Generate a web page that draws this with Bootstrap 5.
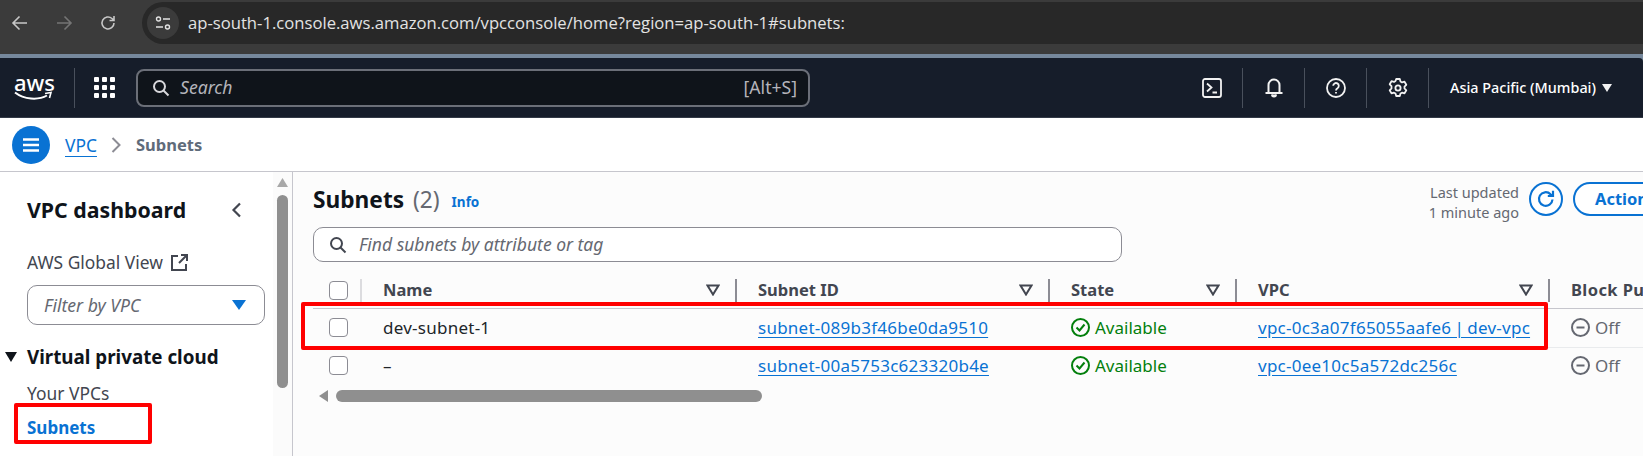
<!DOCTYPE html>
<html lang="en">
<head>
  <meta charset="UTF-8">
  <meta name="viewport" content="width=device-width, initial-scale=1.0">
  <title>Subnets | VPC Console</title>
  <link rel="stylesheet" href="https://cdn.jsdelivr.net/npm/bootstrap@5.3.0/dist/css/bootstrap.min.css">
  <style>
    html, body { height: 100%; }
    body { font-family: "Noto Sans", "Liberation Sans", sans-serif; font-size: 16px; color: #0f141a; overflow: hidden; background: #fff; }
    .shot { position: relative; width: 1643px; height: 456px; overflow: hidden; background: #76889c; }

    /* browser chrome */
    .chrome-bar { height: 54px; background: #3b3b3b; padding-top: 2px; }
    .chrome-btns { width: 142px; height: 42px; padding-left: 11px; gap: 26px; }
    .url-pill { flex: 1; height: 42px; background: #282828; border-radius: 21px 0 0 21px; padding-left: 5px; }
    .site-chip { width: 32px; height: 32px; border-radius: 50%; background: #3b3b3b; margin-right: 9px; }
    .url-text { font-family: "Open Sans", sans-serif; font-size: 16.65px; color: #e3e3e3; white-space: nowrap; }
    .chrome-edge { height: 4px; background: #76889c; }

    /* aws top nav */
    .aws-nav { height: 60px; background: #161d2a; border-bottom: 1px solid #333a47; border-top-right-radius: 4px; color: #fff; }
    .aws-logo { width: 74px; padding-left: 14px; line-height: 1; }
    .aws-word { font-size: 22px; font-weight: 500; line-height: 18px; display: block; margin-top: -2px; }
    .nav-rule { width: 1px; height: 40px; background: #49505c; flex: none; }
    .grid-btn { width: 61px; padding-left: 19px; }
    .grid-dots { display: grid; grid-template-columns: repeat(3, 5px); gap: 3px; }
    .grid-dots i { width: 5px; height: 5px; background: #fff; border-radius: 1px; display: block; }
    .top-search { width: 674px; height: 38px; background: #0f141a; border: 2px solid #6b6f78; border-radius: 8px; padding: 0 11px 0 14px; color: #b4b4bb; font-size: 17.6px; }
    .top-search em { margin-left: 10px; }
    .nav-tools { margin-left: auto; }
    .tool-cell { width: 61px; }
    .region-txt { font-size: 14.4px; font-weight: 500; margin-left: 21px; white-space: nowrap; }
    .region-caret { margin-left: 6px; margin-right: 31px; }

    /* breadcrumb */
    .crumb-bar { height: 54px; background: #fff; border-bottom: 1px solid #c6c6cd; padding: 1px 0 0 12px; }
    .menu-btn { width: 38px; height: 38px; border-radius: 50%; background: #0972d3; color: #fff; margin-right: 15px; }
    .crumb-link { color: #0972d3; text-decoration: underline; text-underline-offset: 4px; font-size: 17.4px; }
    .crumb-now { color: #5f6b7a; font-weight: 700; font-size: 16.5px; }
    .crumb-sep { margin: 0 15px 0 14px; }

    /* sidebar */
    .work-area { height: 284px; background: #fff; }
    .side-nav { width: 293px; border-right: 1px solid #c6c6cd; flex: none; overflow: hidden; }
    .side-body { width: 273px; padding: 24px 9px 0 27px; flex: none; }
    .side-title { font-size: 21.3px; font-weight: 700; line-height: 28px; }
    .side-chev { margin-right: 22px; }
    .side-row { font-size: 17.4px; line-height: 24px; color: #424650; white-space: nowrap; }
    .side-global { margin-top: 26px; }
    .filter-box { height: 40px; width: 238px; border: 1px solid #8c8c94; border-radius: 10px; padding: 0 18px 0 16px; margin-top: 11px; font-size: 17.6px; font-style: italic; color: #656871; }
    .side-group { font-size: 18.8px; font-weight: 700; line-height: 24px; margin: 20px 0 0 -22px; white-space: nowrap; }
    .side-group svg { margin-right: 10px; }
    .side-vpcs { margin-top: 12px; }
    .side-current { color: #0972d3; font-weight: 700; font-size: 17px; margin-top: 11px; }
    .side-next { margin-top: 13px; }
    .side-scroll { width: 19px; background: #fbfbfb; padding: 6px 4px 0; }
    .side-thumb { height: 193px; background: #8f8f8f; border-radius: 6px; margin-top: 8px; }

    /* main */
    .main-pane { flex: 1; min-width: 0; background: #fcfcfc; padding-left: 20px; overflow: hidden; }
    .pane-head { height: 55px; }
    .pane-title { font-size: 22.7px; font-weight: 700; white-space: nowrap; }
    .pane-count { font-weight: 400; color: #656871; margin-left: 3px; }
    .info-link { color: #0972d3; font-size: 13.5px; font-weight: 700; margin-left: 12px; position: relative; top: 3px; }
    .pane-actions { margin-left: auto; gap: 10px; padding-top: 10px; align-self: flex-start; }
    .updated-txt { font-size: 14.5px; line-height: 20px; color: #656871; text-align: right; white-space: nowrap; }
    .action-set { gap: 10px; }
    .refresh-btn { width: 34px; height: 34px; border: 2px solid #0972d3; border-radius: 50%; background: #fff; padding: 0; }
    .actions-clip { width: 70px; overflow: hidden; }
    .actions-btn { width: 120px; height: 34px; border: 2px solid #0972d3; border-radius: 17px; background: #fff; color: #0972d3; font-weight: 700; font-size: 16.5px; padding: 0 0 0 20px; text-align: left; }
    .find-box { width: 809px; height: 35px; border: 1px solid #8c8c94; border-radius: 10px; background: #fff; padding-left: 15px; font-size: 17.5px; font-style: italic; color: #656871; }
    .find-box svg { margin-right: 12px; }
    .subnet-table { width: 1437px; table-layout: fixed; margin: 10px 0 0; --bs-table-bg: transparent; }
    .subnet-table > :not(caption) > * > * { padding: 0; border: 0; vertical-align: middle; }
    .subnet-table thead th { height: 36px; padding-top: 1px; font-weight: 700; color: #424650; font-size: 16.5px; }
    .subnet-table thead tr { border-bottom: 1px solid #c6c6cd; }
    .subnet-table tbody td { height: 39px; font-size: 17px; }
    .subnet-table tbody tr + tr td { height: 37px; }
    .subnet-table tbody tr:first-child { border-bottom: 1px solid #e9ebed; }
    .head-cell { height: 23px; padding: 0 15px 0 21px; border-right: 2px solid #8c8c94; white-space: nowrap; }
    .head-check { height: 23px; padding-left: 16px; border-right: 2px solid #dcdcdf; }
    .head-last { letter-spacing: .4px; }
    .cell-pad { padding-left: 21px; white-space: nowrap; }
    .check-pad { padding-left: 16px; }
    .tick-box { width: 19px; height: 19px; border: 1px solid #8c8c94; border-radius: 4px; background: #fff; display: block; }
    .row-link { color: #0972d3; text-decoration: underline; text-underline-offset: 3px; letter-spacing: .25px; }
    .tight-words { word-spacing: -1.5px; }
    .plain-name { letter-spacing: .25px; }
    .state-ok { color: #037f0c; gap: 5px; }
    .state-off { color: #656871; gap: 5px; }
    .table-scroll { padding: 6px 0 0 6px; gap: 8px; }
    .table-thumb { width: 426px; height: 12px; background: #8f8f8f; border-radius: 6px; }

    /* red annotation boxes */
    .mark-box { position: absolute; border: 4px solid #f00; border-radius: 2px; pointer-events: none; }
    .mark-row { left: 301px; top: 302px; width: 1247px; height: 48px; }
    .mark-side { left: 14px; top: 403px; width: 138px; height: 41px; }
  </style>
</head>
<body>
  <div class="shot">

    <!-- browser toolbar -->
    <div class="chrome-bar d-flex">
      <div class="chrome-btns d-flex align-items-center">
        <svg width="18" height="18" viewBox="0 0 18 18" fill="none" stroke="#c7c7c7" stroke-width="1.6"><path d="M16 9H2M8.5 2.5 2 9l6.5 6.5"/></svg>
        <svg width="18" height="18" viewBox="0 0 18 18" fill="none" stroke="#757575" stroke-width="1.6"><path d="M2 9h14M9.5 2.5 16 9l-6.500 6.500"/></svg>
        <svg width="18" height="18" viewBox="0 0 18 18" fill="none" stroke="#c7c7c7" stroke-width="1.6"><path d="M15 9a6 6 0 1 1-2-4.500L15 6.500M15 2v4.500h-4.500"/></svg>
      </div>
      <div class="url-pill d-flex align-items-center">
        <div class="site-chip d-flex align-items-center justify-content-center">
          <svg width="16" height="16" viewBox="0 0 16 16" fill="none" stroke="#e3e3e3" stroke-width="1.4"><circle cx="3.500" cy="4" r="2"/><path d="M8 4h7M1 12h7"/><circle cx="12.500" cy="12" r="2"/></svg>
        </div>
        <span class="url-text">ap-south-1.console.aws.amazon.com/vpcconsole/home?region=ap-south-1#subnets:</span>
      </div>
    </div>
    <div class="chrome-edge"></div>

    <!-- aws console nav -->
    <nav class="aws-nav d-flex align-items-center">
      <div class="aws-logo">
        <span class="aws-word">aws</span>
        <svg class="d-block" width="39" height="10" viewBox="0 0 39 10" fill="none"><path d="M1 1.500C10 8.500 24 9.500 33 4.500" stroke="#fff" stroke-width="2"/><path d="M31 2.500l6-1-1.500 5.500" stroke="#fff" stroke-width="1.600"/></svg>
      </div>
      <div class="nav-rule"></div>
      <div class="grid-btn">
        <div class="grid-dots"><i></i><i></i><i></i><i></i><i></i><i></i><i></i><i></i><i></i></div>
      </div>
      <div class="top-search d-flex align-items-center">
        <svg width="18" height="18" viewBox="0 0 18 18" fill="none" stroke="#d8d8dc" stroke-width="2"><circle cx="7.500" cy="7.500" r="5.500"/><path d="m11.500 11.500 5 5"/></svg>
        <em>Search</em>
        <span class="ms-auto">[Alt+S]</span>
      </div>
      <div class="nav-tools d-flex align-items-center">
        <div class="tool-cell d-flex justify-content-center">
          <svg width="20" height="20" viewBox="0 0 20 20" fill="none" stroke="#f2f2f2" stroke-width="1.800"><rect x="1" y="1" width="18" height="18" rx="2"/><path d="m5 5.500 4.500 4-4.500 4M10.500 14.500H15"/></svg>
        </div>
        <div class="nav-rule"></div>
        <div class="tool-cell d-flex justify-content-center">
          <svg width="20" height="21" viewBox="0 0 20 21" fill="none" stroke="#f2f2f2" stroke-width="2"><path d="M4.500 15V8a5.500 5.500 0 0 1 11 0v7M1.500 16h17"/><path d="M8 17.500a2 2 0 0 0 4 0" fill="#f2f2f2"/></svg>
        </div>
        <div class="nav-rule"></div>
        <div class="tool-cell d-flex justify-content-center">
          <svg width="20" height="20" viewBox="0 0 20 20" fill="none" stroke="#f2f2f2" stroke-width="1.800"><circle cx="10" cy="10" r="9"/><path d="M7.200 7.800a2.800 2.800 0 1 1 4.300 2.400c-1 .6-1.500 1.100-1.500 2.300"/><path d="M10 14v1.500"/></svg>
        </div>
        <div class="nav-rule"></div>
        <div class="tool-cell d-flex justify-content-center">
          <svg width="20" height="20" viewBox="0 0 20 20" fill="none" stroke="#f2f2f2" stroke-width="1.800" stroke-linejoin="round"><path d="M8.200 1h3.600l.7 2.500 1.500.9 2.500-.7 1.800 3.100-1.800 1.900v1.700l1.800 1.900-1.800 3.100-2.500-.7-1.500.9-.7 2.400H8.200l-.7-2.400-1.500-.9-2.500.7-1.800-3.100 1.800-1.900V8.200L1.700 6.300l1.800-3.100 2.500.7 1.500-.9z"/><circle cx="10" cy="10" r="2.600"/></svg>
        </div>
        <div class="nav-rule"></div>
        <span class="region-txt">Asia Pacific (Mumbai)</span>
        <svg class="region-caret" width="10" height="8" viewBox="0 0 10 8"><path d="M0 0h10L5 8z" fill="#f2f2f2"/></svg>
      </div>
    </nav>

    <!-- breadcrumb -->
    <div class="crumb-bar d-flex align-items-center">
      <div class="menu-btn d-flex align-items-center justify-content-center">
        <svg width="18" height="14" viewBox="0 0 18 14" fill="none" stroke="#fff" stroke-width="2.400"><path d="M1 1.500h16M1 7h16M1 12.500h16"/></svg>
      </div>
      <a class="crumb-link" href="#">VPC</a>
      <svg class="crumb-sep" width="10" height="16" viewBox="0 0 10 16" fill="none" stroke="#8c8c94" stroke-width="2"><path d="m1.500 1 7 7-7 7"/></svg>
      <span class="crumb-now">Subnets</span>
    </div>

    <div class="work-area d-flex">
      <!-- left nav -->
      <aside class="side-nav d-flex">
        <div class="side-body">
          <div class="side-title d-flex align-items-center justify-content-between">
            <span>VPC dashboard</span>
            <svg class="side-chev" width="11" height="16" viewBox="0 0 11 16" fill="none" stroke="#424650" stroke-width="2.200"><path d="M9 1.500 2.500 8 9 14.500"/></svg>
          </div>
          <div class="side-row side-global d-flex align-items-center">
            <span>AWS Global View</span>
            <svg class="ms-2" width="17" height="17" viewBox="0 0 17 17" fill="none" stroke="#424650" stroke-width="2"><path d="M7 2H1v14h14v-6M10 1h6v6M16 1 8 9"/></svg>
          </div>
          <div class="filter-box d-flex align-items-center justify-content-between">
            <span>Filter by VPC</span>
            <svg width="14" height="10" viewBox="0 0 14 10"><path d="M0 0h14L7 10z" fill="#0972d3"/></svg>
          </div>
          <div class="side-group d-flex align-items-center">
            <svg width="12" height="10" viewBox="0 0 12 10"><path d="M0 0h12L6 10z" fill="#0f141a"/></svg>
            <span>Virtual private cloud</span>
          </div>
          <div class="side-row side-vpcs">Your VPCs</div>
          <div class="side-row side-current">Subnets</div>
          <div class="side-row side-next">Route tables</div>
        </div>
        <div class="side-scroll">
          <svg class="d-block" width="11" height="9" viewBox="0 0 11 9"><path d="M5.500 0 11 9H0z" fill="#a8a8a8"/></svg>
          <div class="side-thumb"></div>
        </div>
      </aside>

      <!-- subnets table -->
      <main class="main-pane">
        <div class="pane-head d-flex align-items-center">
          <h1 class="pane-title m-0">Subnets <span class="pane-count">(2)</span></h1>
          <a class="info-link text-decoration-none" href="#">Info</a>
          <div class="pane-actions d-flex">
            <div class="updated-txt">Last updated<br>1 minute ago</div>
            <div class="action-set d-flex align-items-center align-self-start">
              <button class="refresh-btn d-flex align-items-center justify-content-center" type="button">
                <svg width="20" height="20" viewBox="0 0 20 20" fill="none" stroke="#0972d3" stroke-width="2.200"><path d="M16.500 10.500a6.800 6.800 0 1 1-2-5.300l2 1.800M17 1.800V7h-5.200"/></svg>
              </button>
              <div class="actions-clip"><button class="actions-btn" type="button">Actions</button></div>
            </div>
          </div>
        </div>
        <div class="find-box d-flex align-items-center">
          <svg width="18" height="18" viewBox="0 0 18 18" fill="none" stroke="#424650" stroke-width="2"><circle cx="7.500" cy="7.500" r="5.500"/><path d="m11.500 11.500 5 5"/></svg>
          <span>Find subnets by attribute or tag</span>
        </div>
        <table class="table subnet-table">
          <colgroup><col style="width:49px"><col style="width:375px"><col style="width:313px"><col style="width:187px"><col style="width:313px"><col style="width:200px"></colgroup>
          <thead>
            <tr>
              <th><div class="head-check d-flex align-items-center"><span class="tick-box"></span></div></th>
              <th><div class="head-cell d-flex align-items-center justify-content-between"><span>Name</span><svg width="14" height="12" viewBox="0 0 14 12" fill="none" stroke="#424650" stroke-width="2"><path d="M1.500 1.500h11L7 10.500z"/></svg></div></th>
              <th><div class="head-cell d-flex align-items-center justify-content-between"><span>Subnet ID</span><svg width="14" height="12" viewBox="0 0 14 12" fill="none" stroke="#424650" stroke-width="2"><path d="M1.500 1.500h11L7 10.500z"/></svg></div></th>
              <th><div class="head-cell d-flex align-items-center justify-content-between"><span>State</span><svg width="14" height="12" viewBox="0 0 14 12" fill="none" stroke="#424650" stroke-width="2"><path d="M1.500 1.500h11L7 10.500z"/></svg></div></th>
              <th><div class="head-cell d-flex align-items-center justify-content-between"><span>VPC</span><svg width="14" height="12" viewBox="0 0 14 12" fill="none" stroke="#424650" stroke-width="2"><path d="M1.500 1.500h11L7 10.500z"/></svg></div></th>
              <th><div class="cell-pad head-last">Block Public Access</div></th>
            </tr>
          </thead>
          <tbody>
            <tr>
              <td><div class="check-pad"><span class="tick-box"></span></div></td>
              <td><div class="cell-pad plain-name">dev-subnet-1</div></td>
              <td><div class="cell-pad"><a class="row-link" href="#">subnet-089b3f46be0da9510</a></div></td>
              <td><div class="cell-pad state-ok d-flex align-items-center"><svg width="19" height="19" viewBox="0 0 19 19" fill="none" stroke="#037f0c" stroke-width="2"><circle cx="9.500" cy="9.500" r="8.500"/><path d="m5.500 9.500 3 3 5-6"/></svg><span>Available</span></div></td>
              <td><div class="cell-pad"><a class="row-link tight-words" href="#">vpc-0c3a07f65055aafe6 | dev-vpc</a></div></td>
              <td><div class="cell-pad state-off d-flex align-items-center"><svg width="19" height="19" viewBox="0 0 19 19" fill="none" stroke="#656871" stroke-width="2"><circle cx="9.500" cy="9.500" r="8.500"/><path d="M5.500 9.500h8"/></svg><span>Off</span></div></td>
            </tr>
            <tr>
              <td><div class="check-pad"><span class="tick-box"></span></div></td>
              <td><div class="cell-pad">–</div></td>
              <td><div class="cell-pad"><a class="row-link" href="#">subnet-00a5753c623320b4e</a></div></td>
              <td><div class="cell-pad state-ok d-flex align-items-center"><svg width="19" height="19" viewBox="0 0 19 19" fill="none" stroke="#037f0c" stroke-width="2"><circle cx="9.500" cy="9.500" r="8.500"/><path d="m5.500 9.500 3 3 5-6"/></svg><span>Available</span></div></td>
              <td><div class="cell-pad"><a class="row-link" href="#">vpc-0ee10c5a572dc256c</a></div></td>
              <td><div class="cell-pad state-off d-flex align-items-center"><svg width="19" height="19" viewBox="0 0 19 19" fill="none" stroke="#656871" stroke-width="2"><circle cx="9.500" cy="9.500" r="8.500"/><path d="M5.500 9.500h8"/></svg><span>Off</span></div></td>
            </tr>
          </tbody>
        </table>
        <div class="table-scroll d-flex align-items-center">
          <svg width="9" height="12" viewBox="0 0 9 12"><path d="M9 0v12L0 6z" fill="#8f8f8f"/></svg>
          <div class="table-thumb"></div>
        </div>
      </main>
    </div>

    <!-- red annotation boxes -->
    <div class="mark-box mark-row"></div>
    <div class="mark-box mark-side"></div>
  </div>

  <script src="https://cdn.jsdelivr.net/npm/bootstrap@5.3.0/dist/js/bootstrap.bundle.min.js"></script>
</body>
</html>
